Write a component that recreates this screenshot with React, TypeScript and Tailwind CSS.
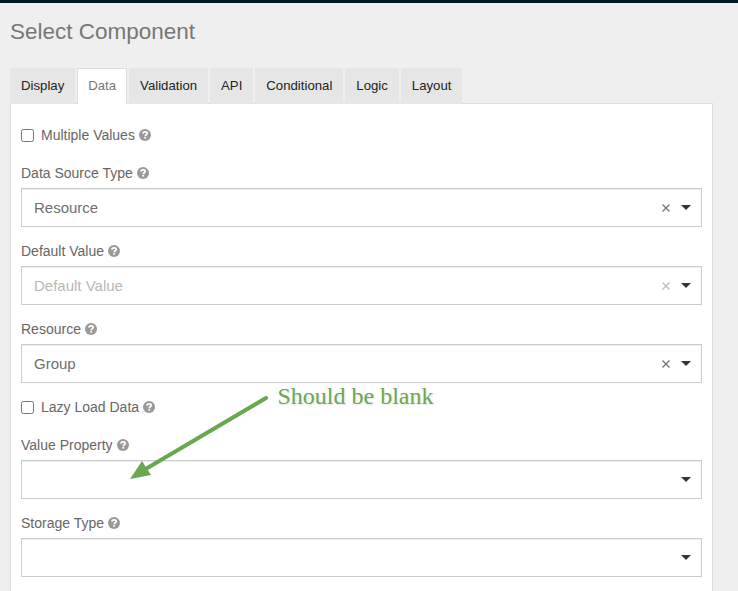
import React from "react";

function HelpIcon() {
  return (
    <svg viewBox="0 0 12 12" className="ml-1 block size-3 shrink-0">
      <circle cx="6" cy="6" r="6" fill="#999999" />
      <path
        d="M3.900 4.600C4 3.400 4.900 2.800 6.100 2.800C7.400 2.800 8.200 3.500 8.200 4.400C8.200 5.800 6.300 5.700 6.200 7.200"
        fill="none"
        stroke="#ffffff"
        strokeWidth="1.7"
      />
      <path d="M5.300 8h1.800v1.600H5.300z" fill="#ffffff" />
    </svg>
  );
}

function Tab({ label, active = false }: { label: string; active?: boolean }) {
  return (
    <div
      className={
        active
          ? "h-9 border border-b-0 border-[#dddddd] bg-white px-[10px] leading-[34px] text-[#777777]"
          : "h-9 bg-[#e6e6e6] px-[11px] leading-9 text-[#222222]"
      }
    >
      {label}
    </div>
  );
}

function CheckboxRow({ label }: { label: string }) {
  return (
    <div className="mb-[18px] flex h-5 items-center">
      <span className="mt-px mr-[7px] size-[13px] rounded-[2.5px] border border-[#767676] bg-white" />
      <span className="leading-5">{label}</span>
      <HelpIcon />
    </div>
  );
}

type SelectProps = { label: string; value?: string; placeholder?: boolean; clearable?: boolean };

function SelectField({ label, value = "", placeholder = false, clearable = false }: SelectProps) {
  return (
    <div className="mb-[14px]">
      <div className="mb-[5px] flex h-5 items-center">
        <span className="leading-5">{label}</span>
        <HelpIcon />
      </div>
      <div className="flex h-[39px] items-center border border-[#cccccc] bg-white pr-[10px] pl-3 shadow-[inset_0_1px_1px_rgba(0,0,0,0.075)]">
        <span className={placeholder ? "flex-1 text-[15px] text-[#b7b7b7]" : "flex-1 text-[15px] text-[#6f6f6f]"}>
          {value}
        </span>
        {clearable && (
          <svg
            viewBox="0 0 8 8"
            className={placeholder ? "mt-px mr-[11px] size-2 stroke-[#bbbbbb]" : "mt-px mr-[11px] size-2 stroke-[#777777]"}
            strokeWidth="1.4"
          >
            <path d="M.5.5l7 7M7.500.5l-7 7" />
          </svg>
        )}
        <svg viewBox="0 0 10 5" className="h-[5px] w-[10px] fill-[#333333]">
          <path d="M0 0h10L5 5z" />
        </svg>
      </div>
    </div>
  );
}

export default function App() {
  return (
    <div className="relative h-[591px] w-[738px] overflow-hidden border-t-[3px] border-[#001a26] bg-[#efefef] font-['Liberation_Sans',Arial,sans-serif] text-sm text-[#666666]">
      <div className="pr-[25px] pl-[10px]">
        <h1 className="pt-[14px] text-[22.5px] leading-[30px] text-[#777777]">Select Component</h1>
        <div className="relative z-10 mt-[21px] -mb-px flex gap-[2px] text-[13.2px]">
          <Tab label="Display" />
          <Tab label="Data" active />
          <Tab label="Validation" />
          <Tab label="API" />
          <Tab label="Conditional" />
          <Tab label="Logic" />
          <Tab label="Layout" />
        </div>
        <div className="h-[500px] border border-[#dddddd] bg-white px-[10px] pt-[21px]">
          <CheckboxRow label="Multiple Values" />
          <SelectField label="Data Source Type" value="Resource" clearable />
          <SelectField label="Default Value" value="Default Value" placeholder clearable />
          <SelectField label="Resource" value="Group" clearable />
          <CheckboxRow label="Lazy Load Data" />
          <SelectField label="Value Property" />
          <SelectField label="Storage Type" />
        </div>
      </div>
      <svg viewBox="130 394 140 88" className="absolute top-[391px] left-[130px] z-20 h-[88px] w-[140px]">
        <path d="M266 398L144 470" stroke="#6aa84f" strokeWidth="4" strokeLinecap="round" />
        <path d="M130 479L142 461L151 475Z" fill="#6aa84f" />
      </svg>
      <span className="absolute top-[379px] left-[277.500px] z-20 font-['Liberation_Serif','Times_New_Roman',serif] text-2xl leading-7 whitespace-nowrap text-[#6aa84f] [text-shadow:1px_1px_2px_rgba(0,0,0,0.12)]">
        Should be blank
      </span>
    </div>
  );
}
